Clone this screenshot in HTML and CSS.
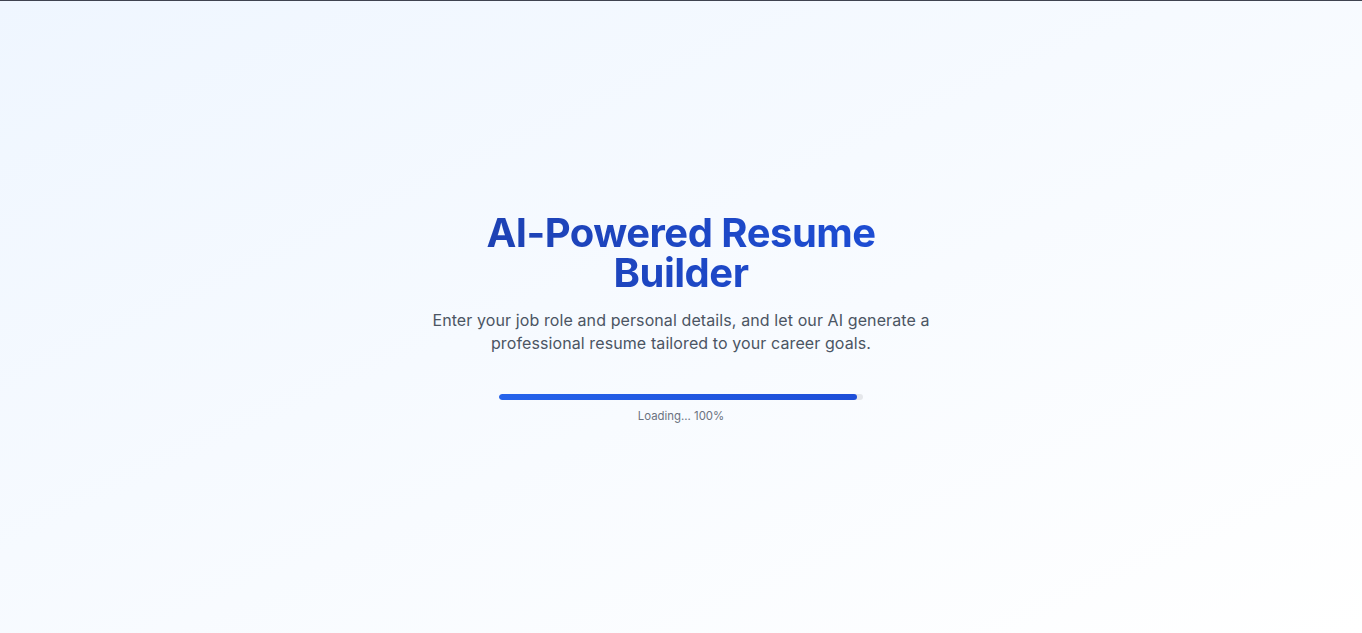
FILE: index.html
```html
<!DOCTYPE html>
<html lang="en">
<head>
<meta charset="utf-8">
<title>AI-Powered Resume Builder</title>
<link rel="stylesheet" href="styles.css">
</head>
<body>
<main class="screen">
  <section class="hero">
    <h1 class="title">AI-Powered Resume Builder</h1>
    <p class="lead">Enter your job role and personal details, and let our AI generate a professional resume tailored to your career goals.</p>
    <div class="loader">
      <div class="track"><div class="fill"></div></div>
      <div class="loader-text">Loading... 100%</div>
    </div>
  </section>
</main>
</body>
</html>
```

FILE: styles.css
```css
* { box-sizing: border-box; }
html, body { margin: 0; padding: 0; }
body {
  font-family: Inter, "Noto Sans", "Liberation Sans", sans-serif;
  border-top: 1px solid #3f4350;
  background: linear-gradient(to bottom right, #eff6ff, #ffffff);
  min-height: 100vh;
}
.screen {
  min-height: calc(100vh - 1px);
  display: flex;
  align-items: center;
  justify-content: center;
}
.hero {
  width: 512px;
  display: flex;
  flex-direction: column;
  align-items: center;
  text-align: center;
  padding-top: 2px;
}
.title {
  margin: 0;
  font-size: 40px;
  line-height: 40px;
  font-weight: 700;
  letter-spacing: -0.5px;
  background: linear-gradient(to right, #1e40af, #1d4ed8);
  -webkit-background-clip: text;
  background-clip: text;
  color: transparent;
}
.lead {
  margin: 16px 0 0;
  font-size: 16px;
  line-height: 23px;
  letter-spacing: 0.1px;
  color: #4b5563;
}
.loader {
  margin-top: 39px;
  width: 364px;
  display: flex;
  flex-direction: column;
  align-items: center;
}
.track {
  width: 100%;
  height: 6px;
  border-radius: 9999px;
  background: #e5e7eb;
  overflow: hidden;
}
.fill {
  width: 98.4%;
  height: 100%;
  border-radius: 9999px;
  background: linear-gradient(to right, #2563eb, #1d4ed8);
}
.loader-text {
  margin-top: 8px;
  font-size: 11.4px;
  line-height: 16px;
  color: #6b7280;
}
```
